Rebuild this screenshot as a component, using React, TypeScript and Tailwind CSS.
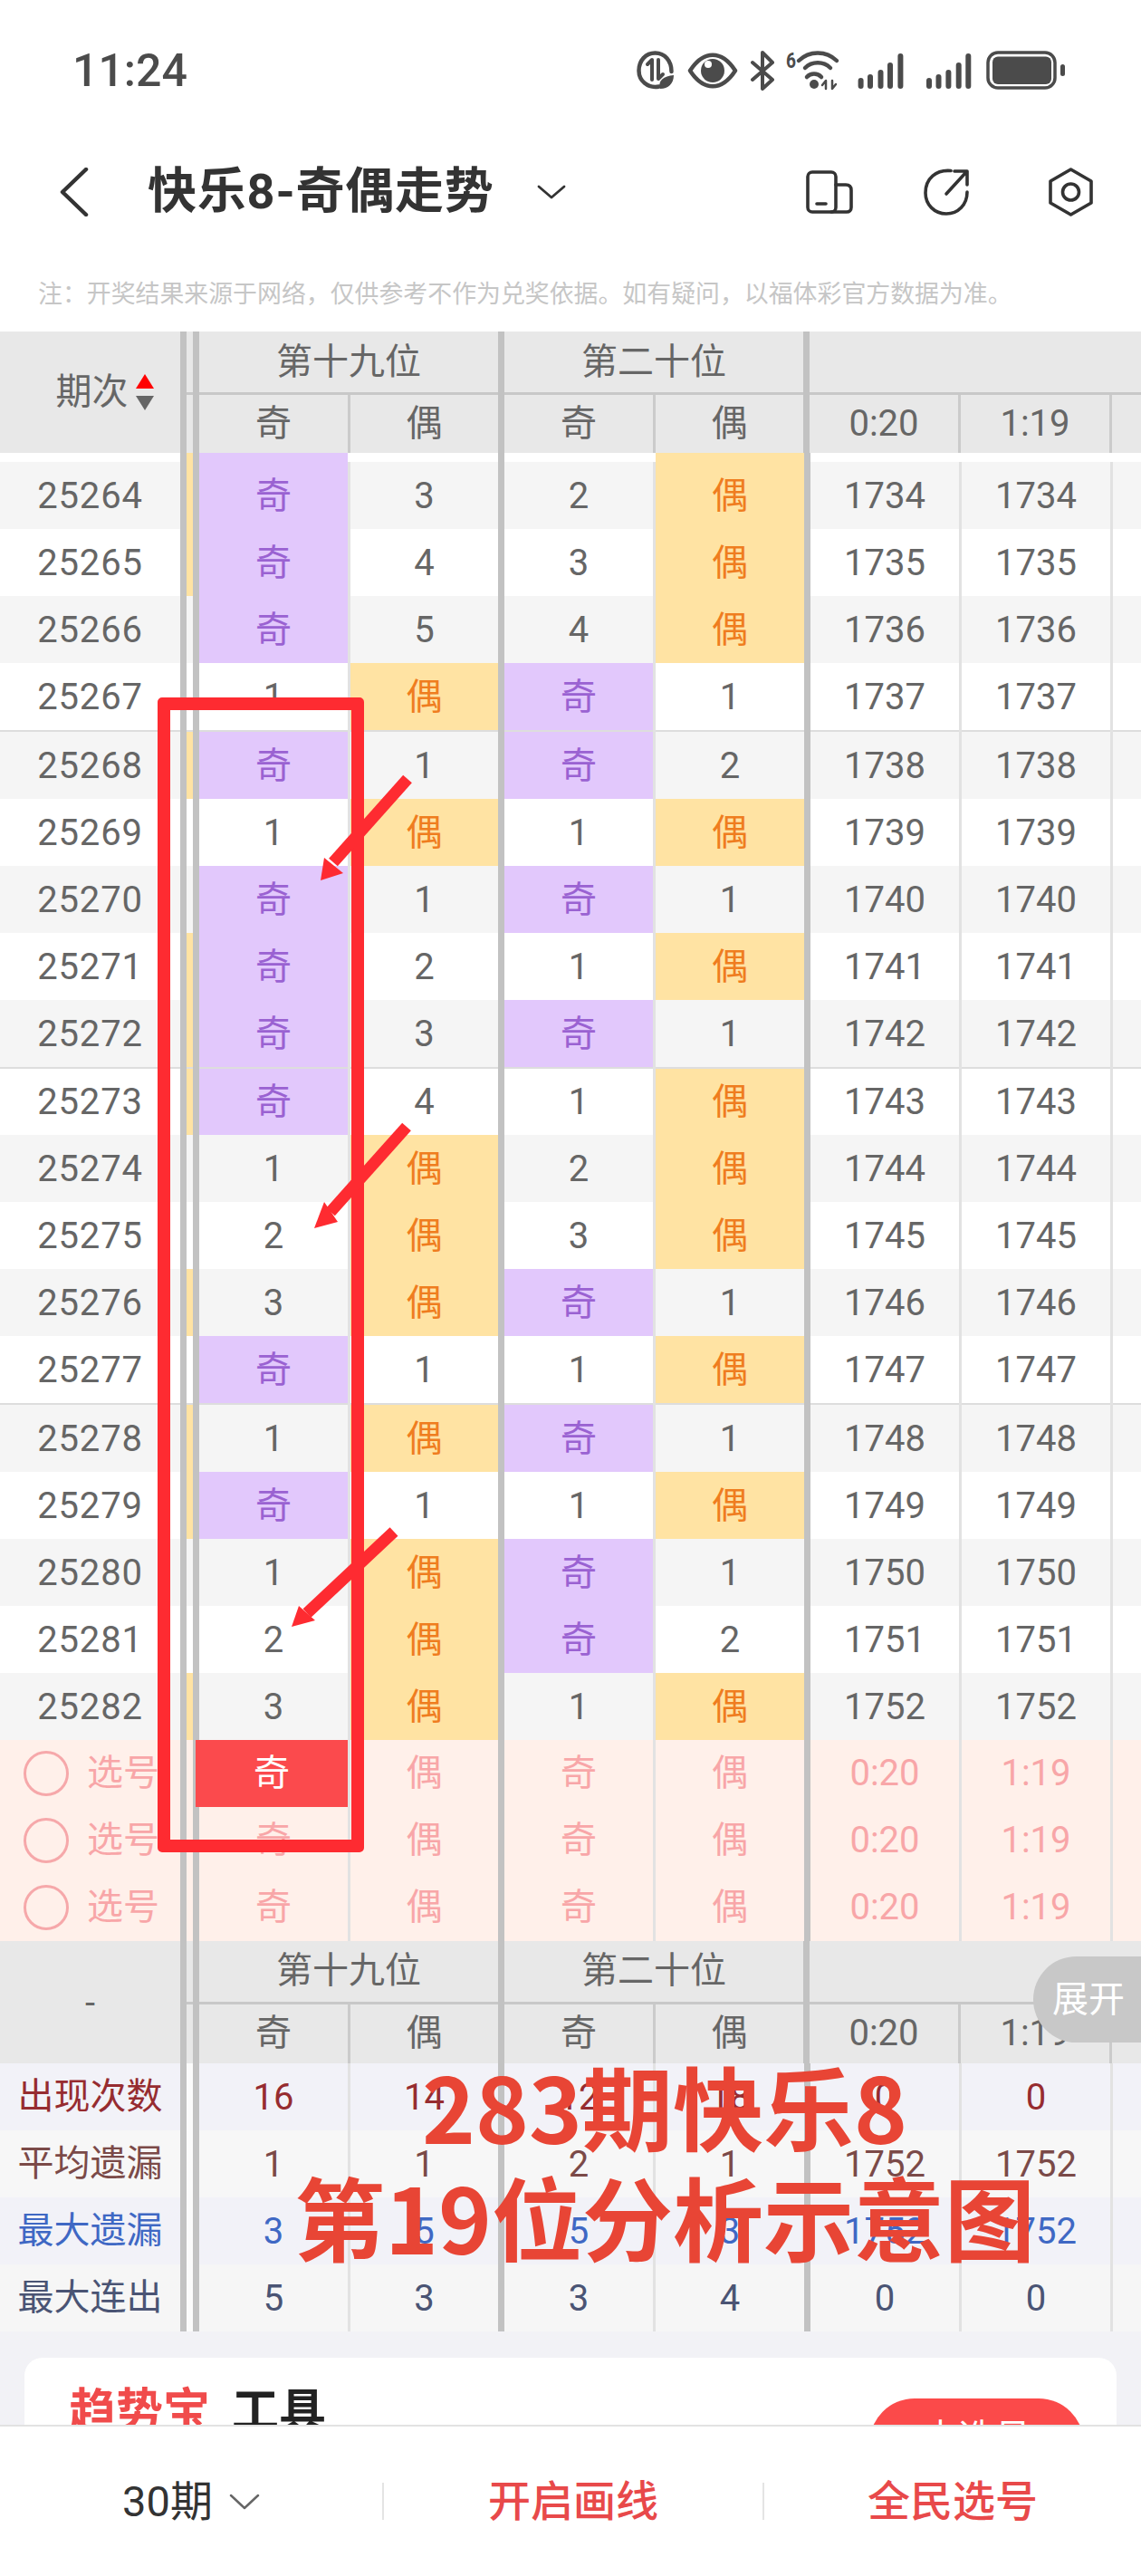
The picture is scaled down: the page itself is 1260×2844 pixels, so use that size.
import React from 'react';

type Row = {
  no: number;
  a: string;
  b: string;
  c: string;
  d: string;
  mark: boolean;
  line?: boolean;
};

const RAW: [string, string, string, string, number][] = [
  ['奇', '3', '2', '偶', 1],
  ['奇', '4', '3', '偶', 1],
  ['奇', '5', '4', '偶', 0],
  ['1', '偶', '奇', '1', 0],
  ['奇', '1', '奇', '2', 1],
  ['1', '偶', '1', '偶', 0],
  ['奇', '1', '奇', '1', 0],
  ['奇', '2', '1', '偶', 1],
  ['奇', '3', '奇', '1', 1],
  ['奇', '4', '1', '偶', 1],
  ['1', '偶', '2', '偶', 0],
  ['2', '偶', '3', '偶', 0],
  ['3', '偶', '奇', '1', 1],
  ['奇', '1', '1', '偶', 0],
  ['1', '偶', '奇', '1', 1],
  ['奇', '1', '1', '偶', 1],
  ['1', '偶', '奇', '1', 0],
  ['2', '偶', '奇', '2', 0],
  ['3', '偶', '1', '偶', 1],
];

const ROWS: Row[] = RAW.map(([a, b, c, d, m], i) => ({
  no: 25264 + i,
  a,
  b,
  c,
  d,
  mark: m === 1,
  line: i === 4 || i === 9 || i === 14,
}));

function Thick() {
  return <div className="w-[7px] shrink-0 self-stretch bg-[#c2c2c2]" />;
}

function Thin({ dark }: { dark?: boolean }) {
  return <div className={`w-[3px] shrink-0 self-stretch ${dark ? 'bg-[#cbcbcb]' : 'bg-[#e2e2e2]'}`} />;
}

function DataCell({ value, width, line, bg }: { value: string; width: string; line?: boolean; bg: string }) {
  let tone = `${bg} text-[#666666]`;
  if (value === '奇') tone = 'bg-[#e2c8fc] text-[#9a62d2]';
  if (value === '偶') tone = 'bg-[#ffe3a3] text-[#ef7d1f]';
  return (
    <div className={`flex items-center justify-center pt-[2px] ${width} ${tone} ${line ? 'border-t-2 border-[#dddddd]' : ''}`}>
      {value}
    </div>
  );
}

function DataRow({ row }: { row: Row }) {
  const bg = row.no % 2 === 0 ? 'bg-[#f5f5f5]' : 'bg-white';
  const total = String(row.no - 25264 + 1734);
  const border = row.line ? 'border-t-2 border-[#dddddd]' : '';
  return (
    <div className={`flex ${row.line ? 'h-[75.67px]' : 'h-[74px]'} ${bg}`}>
      <div className={`flex w-[199px] items-center justify-center pt-[2px] text-[#666666] tracking-[0.8px] ${border}`}>{row.no}</div>
      <Thick />
      <div className={`w-[7px] ${row.mark ? 'bg-[#ffe3a3]' : ''} ${border}`} />
      <Thick />
      <DataCell value={row.a} width="w-[164px]" line={row.line} bg={bg} />
      <Thin />
      <DataCell value={row.b} width="w-[163px]" line={row.line} bg={bg} />
      <Thick />
      <DataCell value={row.c} width="w-[164px]" line={row.line} bg={bg} />
      <Thin />
      <DataCell value={row.d} width="w-[164px]" line={row.line} bg={bg} />
      <Thick />
      <DataCell value={total} width="w-[164px]" line={row.line} bg={bg} />
      <Thin />
      <DataCell value={total} width="w-[164px]" line={row.line} bg={bg} />
      <Thin />
      <div className={`flex-1 ${border}`} />
    </div>
  );
}

function HeadGroup({ title, left, right }: { title: string; left: string; right: string }) {
  return (
    <div className="flex w-[330px] flex-col">
      <div className="flex h-[70px] items-center justify-center border-b-[3px] border-[#c8c8c8]">{title}</div>
      <div className="flex flex-1">
        <div className="flex w-[164px] items-center justify-center">{left}</div>
        <Thin dark />
        <div className="flex flex-1 items-center justify-center">{right}</div>
      </div>
    </div>
  );
}

function TableHead({ height, children }: { height: string; children: React.ReactNode }) {
  return (
    <div className={`flex ${height} bg-[#e8e8e8] text-[#666666]`}>
      <div className="flex w-[199px] items-center justify-center">{children}</div>
      <Thick />
      <div className="h-[70px] w-[7px] border-b-[3px] border-[#c8c8c8]" />
      <Thick />
      <HeadGroup title="第十九位" left="奇" right="偶" />
      <Thick />
      <HeadGroup title="第二十位" left="奇" right="偶" />
      <Thick />
      <div className="flex flex-1 flex-col">
        <div className="h-[70px] border-b-[3px] border-[#c8c8c8]" />
        <div className="flex flex-1">
          <div className="flex w-[164px] items-center justify-center">0:20</div>
          <Thin dark />
          <div className="flex w-[164px] items-center justify-center">1:19</div>
          <Thin dark />
        </div>
      </div>
    </div>
  );
}

function PickRow({ active }: { active?: boolean }) {
  return (
    <div className="flex h-[74px] bg-[#fff0ea] text-[#f8a6a8]">
      <div className="flex w-[199px] items-center pl-[26px]">
        <span className="h-[50px] w-[50px] rounded-full border-[3px] border-[#f6a8aa]" />
        <span className="ml-[20px]">选号</span>
      </div>
      <Thick />
      <div className="w-[7px]" />
      {active ? (
        <>
          <div className="w-[3px] bg-[#c2c2c2]" />
          <div className="flex w-[168px] items-center justify-center bg-[#fb4a4d] text-white">奇</div>
        </>
      ) : (
        <>
          <Thick />
          <div className="flex w-[164px] items-center justify-center">奇</div>
        </>
      )}
      <Thin />
      <div className="flex w-[163px] items-center justify-center">偶</div>
      <Thick />
      <div className="flex w-[164px] items-center justify-center">奇</div>
      <Thin />
      <div className="flex w-[164px] items-center justify-center">偶</div>
      <Thick />
      <div className="flex w-[164px] items-center justify-center">0:20</div>
      <Thin />
      <div className="flex w-[164px] items-center justify-center">1:19</div>
      <Thin />
      <div className="flex-1" />
    </div>
  );
}

function StatRow({ label, values, tone, bg }: { label: string; values: string[]; tone: string; bg: string }) {
  const cell = (value: string, width: string) => (
    <div className={`flex items-center justify-center pt-[2px] ${width}`}>{value}</div>
  );
  return (
    <div className={`flex h-[74px] ${bg} ${tone}`}>
      <div className="flex w-[199px] items-center justify-center">{label}</div>
      <Thick />
      <div className="w-[7px] bg-[#fbfbfb]" />
      <Thick />
      {cell(values[0], 'w-[164px]')}
      <Thin />
      {cell(values[1], 'w-[163px]')}
      <Thick />
      {cell(values[2], 'w-[164px]')}
      <Thin />
      {cell(values[3], 'w-[164px]')}
      <Thick />
      {cell(values[4], 'w-[164px]')}
      <Thin />
      {cell(values[5], 'w-[164px]')}
      <Thin />
      <div className="flex-1" />
    </div>
  );
}

function StatusIcons() {
  const bars = [
    [247.6, 30],
    [258, 26],
    [269.5, 21],
    [280, 13],
    [291.4, 3],
    [323, 30],
    [333.5, 26],
    [344.4, 21],
    [355.7, 13],
    [366.3, 3],
  ];
  return (
    <svg width="473" height="44" viewBox="0 0 473 44" fill="none" stroke="#4b4b4b" strokeLinecap="round" strokeLinejoin="round">
      <path d="M25 39.5C12 42 2.5 33 2.5 22C2.500 11 10 2.500 20.500 2.500C31 2.500 38.500 11 38.500 23" strokeWidth="4.500" />
      <path d="M12 15l5-5v22M24 10v21l5-5" strokeWidth="4" />
      <path d="M26 42C23 33 30 28 41 27C41 36 35 42 26 42Z" fill="#4b4b4b" stroke="none" />
      <path d="M59 22C74 -1 94 -1 109 22C94 45 74 45 59 22Z" strokeWidth="4.500" />
      <circle cx="84" cy="22" r="13" fill="#4b4b4b" stroke="none" />
      <circle cx="79" cy="15" r="4" fill="#ffffff" stroke="none" />
      <path d="M128 13L150 32L139 42V2L150 13L128 32" strokeWidth="4" />
      <text x="165" y="19" fontSize="24" fontWeight="700" fill="#4b4b4b" stroke="none" textLength="11" lengthAdjust="spacingAndGlyphs" fontFamily="Roboto, sans-serif">6</text>
      <path d="M179 11A30 30 0 0 1 221 11M186 19A20 20 0 0 1 214 19M188 29A11 11 0 0 1 204 29" strokeWidth="4.500" />
      <circle cx="196" cy="37" r="5" fill="#4b4b4b" stroke="none" />
      <path d="M209 42V33L205 38M216 33V42L220 37" strokeWidth="2.500" />
      {bars.map(([x, top]) => (
        <rect key={x} x={x - 3} y={top} width="6" height={42 - top} rx="3" fill="#4b4b4b" stroke="none" />
      ))}
      <rect x="388" y="2" width="74" height="39" rx="11" strokeWidth="3.500" />
      <rect x="393" y="6.500" width="65" height="30.500" rx="6" fill="#4b4b4b" stroke="none" />
      <rect x="468" y="15" width="5" height="13" rx="2.500" fill="#4b4b4b" stroke="none" />
    </svg>
  );
}

function NavBar() {
  return (
    <div className="flex h-[112px] items-center pl-[66px] pr-[53px] text-[#333333]">
      <svg width="32" height="54" viewBox="0 0 32 54" fill="none" stroke="#333333" strokeWidth="4.500" strokeLinecap="round" strokeLinejoin="round">
        <path d="M29 2L3 27L29 52" />
      </svg>
      <span className="ml-[65px] text-[54px] leading-none font-bold tracking-[0.8px]">快乐8-奇偶走势</span>
      <svg className="ml-[47px]" width="32" height="16" viewBox="0 0 32 16" fill="none" stroke="#333333" strokeWidth="2.800" strokeLinecap="round" strokeLinejoin="round">
        <path d="M2 2L16 14L30 2" />
      </svg>
      <div className="ml-auto flex items-center">
        <svg width="52" height="48" viewBox="0 0 52 48" fill="none" stroke="#333333" strokeWidth="3.600" strokeLinecap="round" strokeLinejoin="round">
          <rect x="2" y="2" width="31" height="44" rx="5" />
          <path d="M33 16H44C48 16 50 18 50 22V41C50 44 48 46 45 46H28" />
          <path d="M12 37H22" />
        </svg>
        <svg className="ml-[78px]" width="50" height="52" viewBox="0 0 50 52" fill="none" stroke="#333333" strokeWidth="3.600" strokeLinecap="round" strokeLinejoin="round">
          <path d="M30 2.500C14 1 2 11 2 27C2 40 12 50 25 50C38 50 48 40 48 26" />
          <path d="M25 28L47 4M34 3H48V18" />
        </svg>
        <svg className="ml-[88px]" width="49" height="54" viewBox="0 0 49 54" fill="none" stroke="#333333" strokeWidth="3.600" strokeLinecap="round" strokeLinejoin="round">
          <path d="M24.500 2L47 15V39L24.500 52L2 39V15Z" />
          <circle cx="24.500" cy="27" r="9" />
        </svg>
      </div>
    </div>
  );
}

export default function App() {
  return (
    <div className="relative flex h-[2844px] w-[1260px] flex-col overflow-hidden bg-white text-[40px] leading-none [font-family:Roboto,'Noto_Sans_CJK_SC',sans-serif]">
      <div className="flex h-[156px] items-center justify-between pl-[80px] pr-[84px]">
        <span className="text-[50px] font-medium text-[#4b4b4b]">11:24</span>
        <StatusIcons />
      </div>
      <NavBar />
      <div className="h-[98px] pl-[42px] pt-[44px] text-[26.900px] text-[#c6c6c6]">
        注：开奖结果来源于网络，仅供参考不作为兑奖依据。如有疑问，以福体彩官方数据为准。
      </div>

      <TableHead height="h-[134px]">
        <span className="ml-[32px] flex items-center">
          期次
          <span className="ml-[8px] flex flex-col gap-[8px]">
            <span className="h-0 w-0 border-x-[10px] border-b-[16px] border-x-transparent border-b-[#ff0000]" />
            <span className="h-0 w-0 border-x-[10px] border-t-[16px] border-x-transparent border-t-[#666666]" />
          </span>
        </span>
      </TableHead>

      <div className="flex h-[10px] bg-white">
        <div className="w-[199px]" />
        <Thick />
        <div className="w-[7px] bg-[#ffe3a3]" />
        <Thick />
        <div className="w-[164px] bg-[#e2c8fc]" />
        <div className="w-[3px]" />
        <div className="w-[163px]" />
        <Thick />
        <div className="w-[164px]" />
        <div className="w-[3px]" />
        <div className="w-[164px] bg-[#ffe3a3]" />
        <Thick />
      </div>
      {ROWS.map((row) => (
        <DataRow key={row.no} row={row} />
      ))}

      <PickRow active />
      <PickRow />
      <PickRow />

      <TableHead height="h-[135px]">
        <span className="mt-[3px]">-</span>
      </TableHead>

      <StatRow label="出现次数" values={['16', '14', '12', '18', '0', '0']} tone="text-[#962c30]" bg="bg-[#f2f2f8]" />
      <StatRow label="平均遗漏" values={['1', '1', '2', '1', '1752', '1752']} tone="text-[#7b4a48]" bg="bg-[#f7f7f7]" />
      <StatRow label="最大遗漏" values={['3', '5', '5', '3', '1752', '1752']} tone="text-[#3f68c4]" bg="bg-[#f2f2f8]" />
      <StatRow label="最大连出" values={['5', '3', '3', '4', '0', '0']} tone="text-[#4a5474]" bg="bg-[#f6f6f6]" />

      <div className="min-h-0 flex-1 overflow-hidden bg-[#f2f2f6] px-[27px] pt-[29px]">
        <div className="flex h-[200px] items-start justify-between rounded-[20px] bg-white pl-[49px] pr-[36px] pt-[34px]">
          <div className="flex items-center text-[52px] font-bold">
            <span className="text-[#f04b4b]">趋势宝</span>
            <span className="ml-[24px] text-[#222222]">工具</span>
          </div>
          <div className="mt-[11px] h-[100px] w-[237px] rounded-[50px] bg-[#fb4a4a] pt-[24px] text-center text-[40px] text-white">去选号</div>
        </div>
      </div>

      <div className="flex h-[167px] shrink-0 items-center border-t-2 border-[#e2e2e2] bg-white text-[47px]">
        <div className="flex w-[422px] items-center justify-center text-[#333333]">
          30期
          <svg className="ml-[18px]" width="34" height="18" viewBox="0 0 34 18" fill="none" stroke="#666666" strokeWidth="2.500" strokeLinecap="round" strokeLinejoin="round">
            <path d="M2 2L17 16L32 2" />
          </svg>
        </div>
        <div className="flex h-[41px] w-[420px] items-center justify-center border-l-2 border-[#e4e4e4] font-medium text-[#e8494a]">开启画线</div>
        <div className="flex h-[41px] flex-1 items-center justify-center border-l-2 border-[#e4e4e4] font-medium text-[#e8494a]">全民选号</div>
      </div>

      {/* 展开 tab over the table */}
      <div className="absolute left-[1141px] top-[2160px] flex h-[95px] w-[119px] items-center rounded-l-[48px] bg-[#c8c8c8] pl-[21px] text-white">展开</div>

      {/* annotations drawn on top of the screenshot */}
      <div className="absolute left-[174px] top-[770px] h-[1275px] w-[228px] rounded-[5px] border-[14px] border-[#fe2b31]" />
      <svg className="absolute left-0 top-0" width="1260" height="2844" viewBox="0 0 1260 2844" fill="#fe2b31" stroke="none">
        <path d="M450 860L368 952" stroke="#fe2b31" strokeWidth="13" />
        <polygon points="354,972 358,947 379,964" />
        <path d="M449 1244L365 1338" stroke="#fe2b31" strokeWidth="13" />
        <polygon points="347,1356 358,1327 373,1349" />
        <path d="M435 1691L339 1781" stroke="#fe2b31" strokeWidth="13" />
        <polygon points="322,1796 330,1773 348,1789" />
      </svg>
      <div className="absolute left-[201px] top-[2263px] w-[1066px] text-center text-[100px] leading-[122px] font-bold text-[#e84535] [font-family:'Noto_Sans_CJK_SC',sans-serif]">
        <div>283期快乐8</div>
        <div>第19位分析示意图</div>
      </div>
    </div>
  );
}
